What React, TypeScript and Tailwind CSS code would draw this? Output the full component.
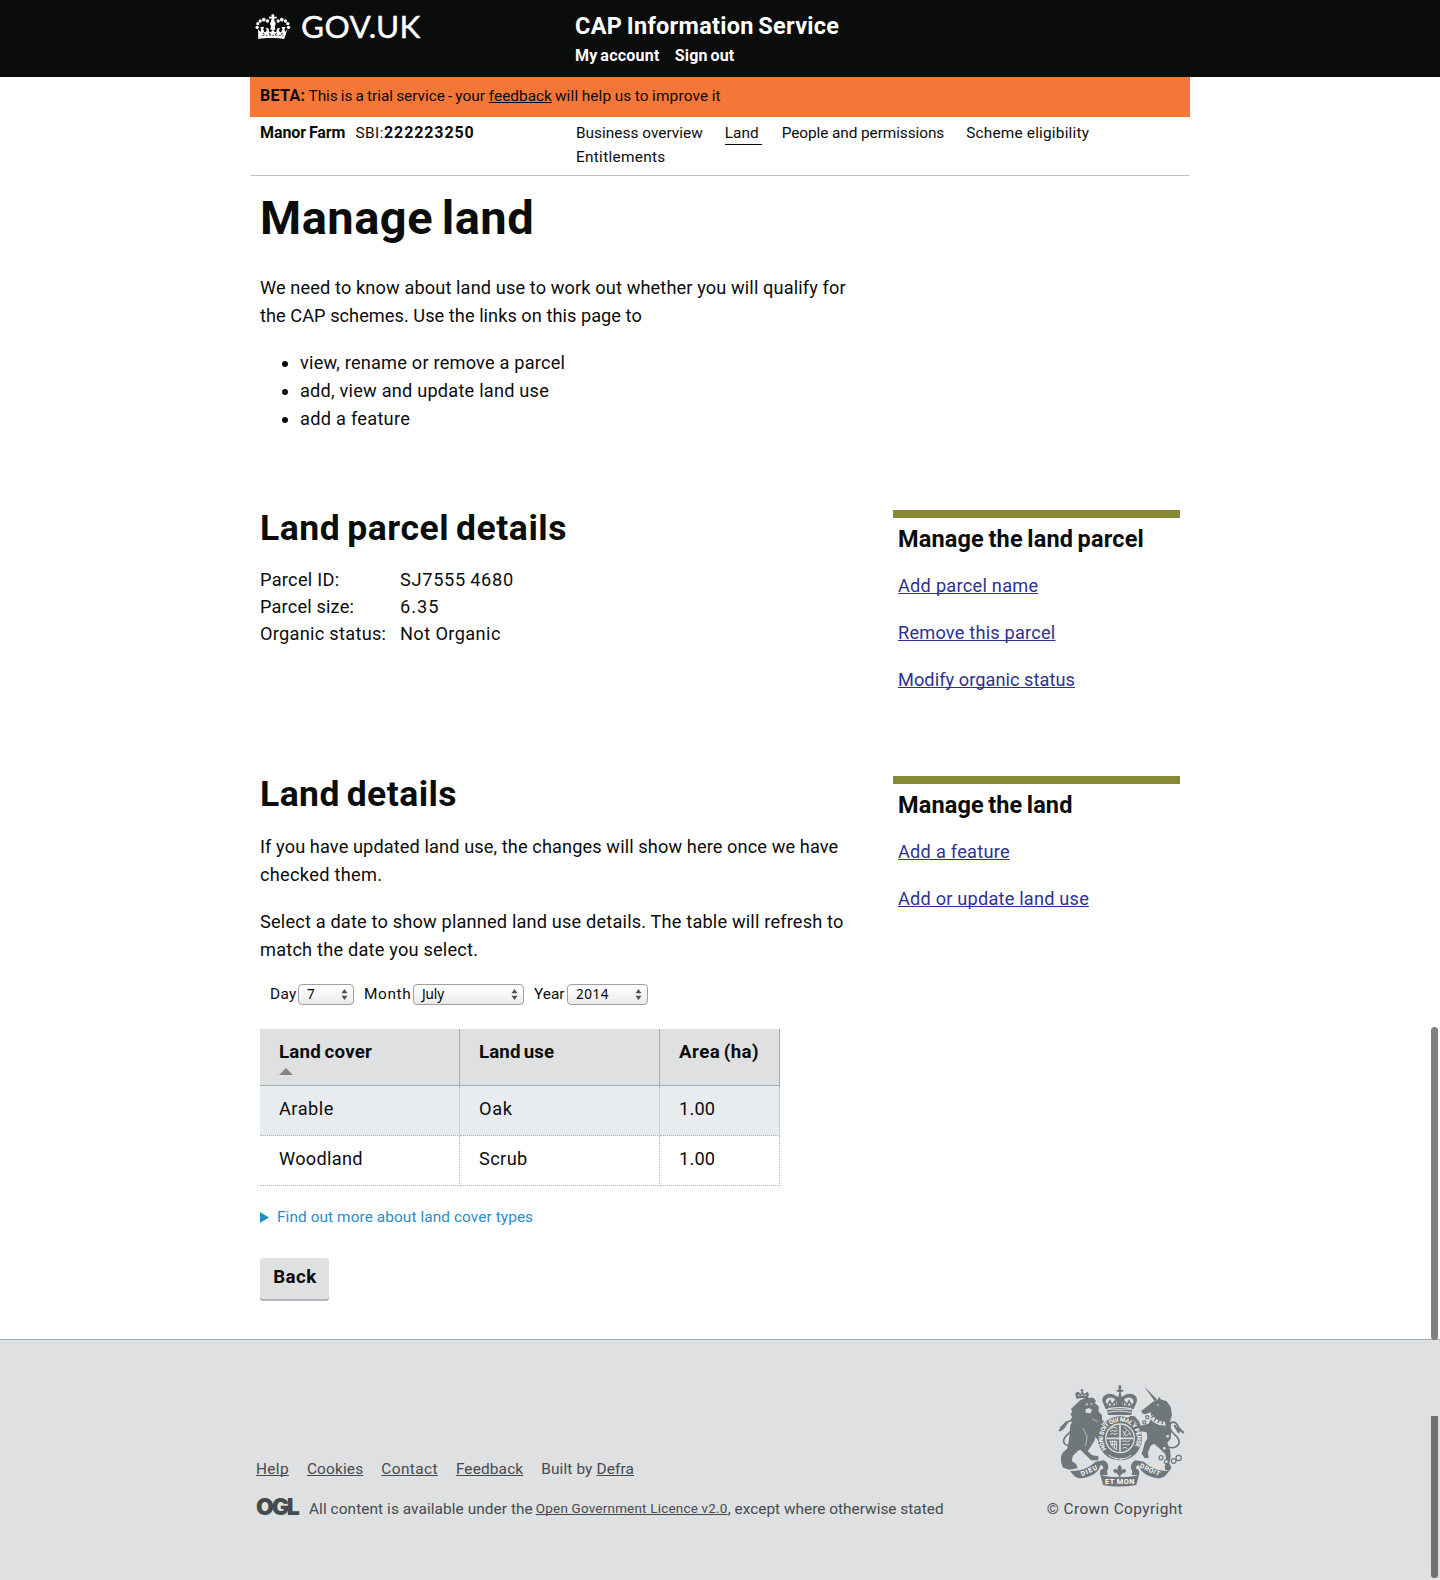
import React from "react";

const link = "underline decoration-1 underline-offset-[1px] [text-decoration-skip-ink:none]";

function GovCrown() {
  const dots: [number, number, number][] = [
    [5, 39, 5], [7, 28, 5], [14, 20, 5], [25, 16, 5.5], [36, 20, 5],
    [68, 20, 5], [79, 16, 5.5], [90, 20, 5], [97, 28, 5], [99, 39, 5],
  ];
  return (
    <svg className="mt-px" width="36" height="26" viewBox="-1 -1 107 78" fill="#fff" aria-hidden="true">
      <path d="M52 0c3 0 5 2 4.500 5l-1 3 6-1.500c3-.5 3 7 0 6.500l-6-1 2 10c4 2 4 9 0 12l2 12h-15l2-12c-4-3-4-10 0-12l2-10-6 1c-3 .5-3-7 0-6.500l6 1.500-1-3C47 2 49 0 52 0z" />
      {dots.map(([cx, cy, r]) => (
        <circle key={`${cx}-${cy}`} cx={cx} cy={cy} r={r} />
      ))}
      <path d="M8 44l7 9 2-8-3-7h12l-3 7 4 9c4-1 7-4 7-8l-4-3c4-4 9-2 10 3l2 8 5-2 5-7 5 7 5 2 2-8c1-5 6-7 10-3l-4 3c0 4 3 7 7 8l4-9-3-7h12l-3 7 2 8 7-9-10 30c-22-4-56-4-78 0z" />
      <path d="M20 63l64 0" stroke="#0b0c0c" strokeWidth="2" strokeDasharray="6 4" fill="none" />
      <path d="M40 57l6 4M64 57l-6 4M22 56l5 4M82 56l-5 4" stroke="#0b0c0c" strokeWidth="3" />
    </svg>
  );
}

function RoyalArms() {
  return (
    <svg className="mr-[-1px]" width="127" height="103" viewBox="55 43 381 309" fill="#6f777b" stroke="none" aria-hidden="true">
      <g fill="none" stroke="#6f777b">
        <path d="M100 226c-24 6-36-8-22-26 12-14 30-22 26-40-3-12-20-8-26 6-3 8-8 12-14 16" strokeWidth="5" />
        <path d="M58 184l16-14M62 176l20-20" strokeWidth="6" />
        <path d="M386 232c24 8 40-10 28-28-10-12-26-20-24-36 2-14 18-14 24 0l6 18" strokeWidth="5" />
        <path d="M404 166l14 24M414 172l18 18" strokeWidth="6" />
      </g>
      <path d="M109 104l12-12 18-8h22l8 10-4 6 12 10 0 16 10 10 0 14 6 6-8 8 4 8-4 8 6 10 4 14 0 16-16-4-12-14-3 12-14 22-6 8 12 12 20 4 0 12-22 0-18-18-14-14-8 4-14 14-4 16 14 10 4 12-24 4-20-6-6-16 0-18 6-12 12-10 4-16 4-28 2-28 6-10-6-6 6-8-6-8 6-8-4-8z" />
      <path d="M137 103l8-2-3 7zM152 101l7 1-5 5zM138 119l10-4 9 5-5 12-6-3-8 1z" fill="#dee0e2" />
      <path d="M130 176l12 24-4 30M158 148l16 8" stroke="#dee0e2" strokeWidth="2" fill="none" />
      <path d="M110 88l-3-18 9-4 7 7 4-10 7 10 9-7 5 8-4 13c-11-3-22-3-34 1z" />
      <circle cx="127" cy="62" r="4" />
      <path d="M114 79l6-3M124 77l6-1M134 76l6 2" stroke="#dee0e2" strokeWidth="3" />

      <path d="M314 51l38 38-7 6z" />
      <path d="M340 96l14-6 4-9 5 8 18 6 12 16 4 24-6 22 4 28-2 22-10 12 8 22 2 20-4 20 6 12-4 10-14-1-2-12 6-14-4-22-18-18-16-14-10 6-8 20 2 16-12 2-10-16 4-6 6-24 8-14-2-18-24-4-12 6-10-2-4-8 8-4 14-4-4-14-12-8-10 4-4-8 10-8 12 2 14 16 4 12 24-6 8-18-2-16-16 6-10-3-2-8 16-12z" />
      <path d="M350 106l8-3-2 6z" fill="#dee0e2" />
      <path d="M334 140l10 12 16 8 18 2" stroke="#dee0e2" strokeWidth="12" fill="none" />
      <path d="M335 145l8-8M343 155l7-11M355 160l4-11M367 163l3-12M379 163l-1-12" stroke="#6f777b" strokeWidth="4.500" />
      <g fill="#dee0e2" stroke="#6f777b" strokeWidth="3.500">
        <circle cx="323" cy="143" r="5" /><circle cx="314" cy="158" r="5" />
        <circle cx="384" cy="200" r="6" /><circle cx="374" cy="236" r="6" />
        <circle cx="364" cy="264" r="6" /><circle cx="380" cy="276" r="6" />
        <circle cx="402" cy="274" r="7" /><circle cx="417" cy="265" r="8" />
      </g>

      <path d="M198 118l-10-24c-2-16 16-26 32-20l16 8 3-14-8-3v-5l7 1-2-8c0-9 9-9 9 0l-2 8 8-1v5l-8 3 3 14 14-8c18-6 34 4 32 20l-10 24z" />
      <path d="M198 96c0-10 12-16 24-10 8 6 10 14 11 20l-28 2zM282 96c0-10-12-16-24-10-8 6-10 14-11 20l28 2z" fill="#dee0e2" />
      <path d="M203 108l8-14 6 12 9-12 4 15M276 108l-8-14-6 12-9-12-4 15" stroke="#6f777b" strokeWidth="5" fill="none" />
      <path d="M205 117c22-4 50-4 70 0" stroke="#dee0e2" strokeWidth="4" fill="none" />
      <path d="M203 120h74l-2 16h-70z" />
      <path d="M206 128c20-5 46-5 68 0" stroke="#dee0e2" strokeWidth="3" fill="none" />

      <circle cx="241" cy="206" r="66" />
      <circle cx="241" cy="206" r="45" fill="#dee0e2" />
      <circle cx="241" cy="206" r="41" />
      <path d="M241 166v80M201 206h80" stroke="#dee0e2" strokeWidth="5" />
      <g fill="none" stroke="#dee0e2" strokeWidth="3">
        <path d="M211 185l8-3 7 3 8-3M211 194l8-3 7 3 8-3M215 176l8-3 10 3" />
        <path d="M248 216l8-3 7 3 8-3M248 226l8-3 7 3 8-3M248 236l8-3 7 3" />
        <path d="M252 174c8 2 16 8 22 26M249 183l9 16 14-9M252 198l8-16" />
        <path d="M211 213c2 14 9 23 20 27v-26M211 215h20M218 213v16M225 213v24M213 224h18" />
      </g>
      <path id="garter" d="M201 238A51 51 0 1 1 281 238" fill="none" />
      <text fill="#fff" fontFamily="Roboto, sans-serif" fontWeight="700" fontSize="18">
        <textPath href="#garter" textLength="218">HONI SOIT QUI MAL Y PENSE</textPath>
      </text>
      <path d="M207 256c20 16 48 16 68 0" fill="none" stroke="#dee0e2" strokeWidth="3" />
      <circle cx="228" cy="267" r="3" fill="#dee0e2" /><circle cx="245" cy="268" r="3" fill="#dee0e2" />

      <path d="M92 304c30 0 54-8 76-28l24-4c16 8 18 22 8 36h-14c8-12 6-20-4-22-2 22-28 36-58 40-14 0-24-8-32-22z" />
      <path d="M388 304c-30 0-54-8-76-28l-24-4c-16 8-18 22-8 36h14c-8-12-6-20 4-22 2 22 28 36 58 40 14 0 24-8 32-22z" />
      <path d="M182 316c38 9 78 9 116 0l-8 30c-34 6-68 6-100 0z" />
      <path d="M182 316c-4-12 2-20 18-20l4 20zM298 316c4-12-2-20-18-20l-4 20z" />
      <path d="M240 285c9 8 7 14 4 20 6-11 18-9 14 2-3 5-7 4-8 0 0 5-3 8-7 8v7h-6v-7c-4 0-7-3-7-8-1 4-5 5-8 0-4-11 8-13 14-2-3-6-5-12 4-20z" />
      <g fill="#fff" fontFamily="Roboto, sans-serif" fontWeight="700">
        <text x="196" y="344" fontSize="22" textLength="88">ET MON</text>
        <text transform="translate(127 320) rotate(-24)" fontSize="20" textLength="52">DIEU</text>
        <text transform="translate(299 293) rotate(25)" fontSize="20" textLength="64">DROIT</text>
      </g>
    </svg>
  );
}

function Select({ value, width, tracking }: { value: string; width: string; tracking: string }) {
  return (
    <button
      className={`${width} ${tracking} flex h-[21px] items-center justify-between rounded-[4px] border border-[#a0a0a0] bg-linear-to-b from-white via-[#f6f6f6] to-[#e9e9e9] pl-[8px] pr-[5px] font-['Noto_Sans'] text-[13.500px] leading-[19px] text-black`}
    >
      <span>{value}</span>
      <svg width="7" height="11" viewBox="0 0 7 11" fill="#505050" aria-hidden="true">
        <path d="M3.500 0L6.500 4.300H.5zM3.500 11L6.500 6.700H.5z" />
      </svg>
    </button>
  );
}

function SidePanel({ title, children }: { title: React.ReactNode; children: React.ReactNode }) {
  return (
    <aside className="mt-[2px] h-fit w-[287px] border-t-8 border-[#878a33] pl-[5px] pt-[6px]">
      <h3 className="text-[23.500px] font-bold leading-[30px] [word-spacing:-1.500px]">{title}</h3>
      <div className="mt-[18px] flex flex-col items-start gap-[19px] text-[18.200px] leading-[28px] text-[#2e3191]">
        {children}
      </div>
    </aside>
  );
}

export default function App() {
  return (
    <div className="relative h-[1580px] w-[1440px] overflow-hidden bg-white font-['Roboto',sans-serif] text-[#0b0c0c]">
      <header className="h-[77px] bg-[#0b0c0c] text-white">
        <div className="mx-auto flex w-[940px]">
          <div className="flex w-[325px] items-start pl-[5px] pt-[13px]">
            <GovCrown />
            <span className="ml-[10px] mt-[-5px] font-['Lato',sans-serif] text-[31.500px] leading-[36px] tracking-[0.400px] [-webkit-text-stroke:0.4px_white]">GOV.UK</span>
          </div>
          <div className="pt-[11px] font-bold">
            <div className="text-[23.500px] leading-[30px] tracking-[0.280px] [word-spacing:-1.500px]">CAP Information Service</div>
            <nav className="mt-[3px] flex gap-[15px] text-[16px] leading-[24px] [word-spacing:-1.500px]">
              <a className="tracking-[0.260px]">My account</a>
              <a className="tracking-[0.200px]">Sign out</a>
            </nav>
          </div>
        </div>
      </header>

      <div className="mx-auto w-[940px]">
        <div className="h-[40px] bg-[#f47738] px-[10px] text-[15.400px] leading-[38px]">
          <b className="mr-[3px] text-[16px] tracking-[0.350px]">BETA:</b>
          <span className="tracking-[-0.020px] [word-spacing:-0.700px]">This is a trial service - your</span>
          <a className={`${link} ml-[4px]`}>feedback</a>
          <span className="ml-[3px] tracking-[0.150px] [word-spacing:-0.600px]">will help us to improve it</span>
        </div>

        <div className="flex h-[59px] border-b border-[#bfc1c3] pt-[4px] text-[15.400px] leading-[24px]">
          <div className="w-[326px] shrink-0 pl-[10px]">
            <b className="mr-[10px] text-[16px] tracking-[-0.080px] [word-spacing:-1px]">Manor Farm</b>
            <span className="tracking-[0.480px]">SBI:</span>
            <b className="text-[16px] tracking-[0.900px]">222223250</b>
          </div>
          <nav className="flex flex-wrap content-start items-start gap-x-[22px]">
            <a className="tracking-[0.010px]">Business overview</a>
            <a className="mr-[-2px] h-[24px] w-[37px] border-b border-[#0b0c0c] tracking-[0.060px]">Land</a>
            <a className="tracking-[-0.090px]">People and permissions</a>
            <a className="tracking-[0.190px]">Scheme eligibility</a>
            <a className="tracking-[0.280px]">Entitlements</a>
          </nav>
        </div>

        <main className="px-[10px] pt-[14px] text-[18.200px] leading-[28px]">
          <h1 className="text-[47px] font-bold leading-[56px] tracking-[0.500px] [word-spacing:-3.500px]">Manage land</h1>
          <p className="mt-[28px]">
            <span className="tracking-[0.115px]">We need to know about land use to work out whether you will qualify for</span>
            <br />
            <span className="tracking-[0.040px]">the CAP schemes. Use the links on this page to</span>
          </p>
          <ul className="mt-[19px] list-disc pl-[40px]">
            <li className="tracking-[0.200px]">view, rename or remove a parcel</li>
            <li className="tracking-[0.210px]">add, view and update land use</li>
            <li className="tracking-[0.270px]">add a feature</li>
          </ul>

          <section className="mt-[75px] flex h-[266px]">
            <div className="w-[633px]">
              <h2 className="text-[35.500px] font-bold leading-[40px] tracking-[0.550px] [word-spacing:-2.500px]">Land parcel details</h2>
              <dl className="mt-[18px] grid grid-cols-[140px_1fr] leading-[27px] tracking-[0.280px]">
                <dt>Parcel ID:</dt>
                <dd className="tracking-[0.700px] [word-spacing:-1px]">SJ7555 4680</dd>
                <dt className="tracking-[0.160px]">Parcel size:</dt>
                <dd className="tracking-[1px]">6.35</dd>
                <dt>Organic status:</dt>
                <dd className="tracking-[0.400px]">Not Organic</dd>
              </dl>
            </div>
            <SidePanel title={<span className="tracking-[0.160px]">Manage the land parcel</span>}>
              <a className={`${link} tracking-[0.250px]`}>Add parcel name</a>
              <a className={`${link} tracking-[0.200px]`}>Remove this parcel</a>
              <a className={`${link} tracking-[0.050px]`}>Modify organic status</a>
            </SidePanel>
          </section>

          <section className="flex">
            <div className="w-[633px]">
              <h2 className="text-[35.500px] font-bold leading-[40px] tracking-[0.450px] [word-spacing:-2.500px]">Land details</h2>
              <p className="mt-[19px]">
                <span className="tracking-[0.100px]">If you have updated land use, the changes will show here once we have</span>
                <br />
                <span className="tracking-[0.290px]">checked them.</span>
              </p>
              <p className="mt-[19px]">
                <span className="tracking-[0.170px]">Select a date to show planned land use details. The table will refresh to</span>
                <br />
                <span className="tracking-[0.200px]">match the date you select.</span>
              </p>

              <div className="mt-[20px] flex h-[21px] items-center pl-[10px] text-[15.400px] leading-[19px]">
                <span className="w-[28px] tracking-[0.300px]">Day</span>
                <Select value="7" width="w-[56px]" tracking="tracking-normal" />
                <span className="ml-[10px] w-[49px] tracking-[0.600px]">Month</span>
                <Select value="July" width="w-[111px]" tracking="tracking-[-0.100px]" />
                <span className="ml-[10px] w-[33px] tracking-normal">Year</span>
                <Select value="2014" width="w-[81px]" tracking="tracking-[0.500px]" />
              </div>

              <table className="mt-[24px] w-[520px] table-fixed border-separate border-spacing-0 text-left">
                <colgroup>
                  <col className="w-[200px]" />
                  <col className="w-[200px]" />
                  <col className="w-[120px]" />
                </colgroup>
                <thead>
                  <tr className="h-[57px] bg-[#dee0e2] align-top text-[18.700px] [word-spacing:-1.500px]">
                    <th className="border-b border-r border-[#a1acb2] p-0 pl-[19px] pt-[9px] tracking-[0.250px]">
                      <div className="h-[28px]">Land cover</div>
                      <svg className="mt-[2px] block" width="14" height="7" viewBox="0 0 14 7" fill="#858688" aria-hidden="true">
                        <path d="M7 0l7 7H0z" />
                      </svg>
                    </th>
                    <th className="border-b border-r border-[#a1acb2] p-0 pl-[19px] pt-[9px] tracking-[0.100px]">Land use</th>
                    <th className="border-b border-r border-[#a1acb2] p-0 pl-[19px] pt-[9px] tracking-[0.450px]">Area (ha)</th>
                  </tr>
                </thead>
                <tbody>
                  <tr className="h-[50px] bg-[#e8ecef] align-top">
                    <td className="border-b border-r border-dotted border-[#a9b3b8] p-0 pl-[19px] pt-[9px] tracking-[0.500px]">Arable</td>
                    <td className="border-b border-r border-dotted border-[#a9b3b8] p-0 pl-[19px] pt-[9px] tracking-[0.700px]">Oak</td>
                    <td className="border-b border-r border-dotted border-[#a9b3b8] p-0 pl-[19px] pt-[9px] tracking-[0.200px]">1.00</td>
                  </tr>
                  <tr className="h-[50px] align-top">
                    <td className="border-b border-r border-dotted border-[#a9b3b8] p-0 pl-[19px] pt-[9px] tracking-[0.300px]">Woodland</td>
                    <td className="border-b border-r border-dotted border-[#a9b3b8] p-0 pl-[19px] pt-[9px] tracking-[0.400px]">Scrub</td>
                    <td className="border-b border-r border-dotted border-[#a9b3b8] p-0 pl-[19px] pt-[9px] tracking-[0.200px]">1.00</td>
                  </tr>
                </tbody>
              </table>

              <div className="mt-[19px] flex items-center text-[15.400px] leading-[24px] text-[#2b8cc4]">
                <svg width="9" height="11" viewBox="0 0 9 11" fill="#2b8cc4" aria-hidden="true">
                  <path d="M0 0l9 5.500L0 11z" />
                </svg>
                <span className="ml-[8px] tracking-[0.080px]">Find out more about land cover types</span>
              </div>

              <button className="mt-[29px] block h-[41px] w-[69px] rounded-[3px] bg-[#dee0e2] pb-[8px] pl-px pt-[5px] text-[18.700px] font-bold leading-[28px] tracking-[0.500px] shadow-[0_2px_0_#b2b5b9]">
                Back
              </button>
            </div>
            <SidePanel title={<span className="tracking-[0.120px]">Manage the land</span>}>
              <a className={`${link} tracking-[0.250px]`}>Add a feature</a>
              <a className={`${link} tracking-[0.200px]`}>Add or update land use</a>
            </SidePanel>
          </section>
        </main>
      </div>

      <footer className="mt-[40px] h-[241px] border-t border-[#a1acb2] bg-[#dee0e2] text-[15.400px] leading-[24px] text-[#454a4d]">
        <div className="mx-auto flex w-[928px] justify-between">
          <div className="pt-[117px]">
            <div className="flex gap-[18px]">
              <a className={`${link} tracking-[0.350px]`}>Help</a>
              <a className={`${link} tracking-[0.160px]`}>Cookies</a>
              <a className={`${link} tracking-[0.400px]`}>Contact</a>
              <a className={`${link} tracking-[0.150px]`}>Feedback</a>
              <span className="tracking-[0.120px]">
                Built by <a className={link}>Defra</a>
              </span>
            </div>
            <div className="mt-[16px] flex">
              <span className="w-[53px] font-['Inter',sans-serif] text-[23px] font-black leading-[21px] tracking-[-2.200px]">OGL</span>
              <span className="mr-[3px] tracking-[0.070px]">All content is available under the</span>
              <a className={`${link} text-[13.400px] tracking-[0.240px]`}>Open Government Licence v2.0</a>
              <span className="tracking-[0.010px]">, except where otherwise stated</span>
            </div>
          </div>
          <div className="flex flex-col items-end pt-[44px]">
            <RoyalArms />
            <span className="mr-px mt-[10px] tracking-[0.400px]">© Crown Copyright</span>
          </div>
        </div>
      </footer>

      <div className="absolute left-[1431px] top-[1027px] h-[313px] w-[7px] rounded-full bg-[#808080]" />
      <div className="absolute left-[1431px] top-[1416px] h-[162px] w-[7px] rounded-b-full bg-[#6f7072]" />
    </div>
  );
}
